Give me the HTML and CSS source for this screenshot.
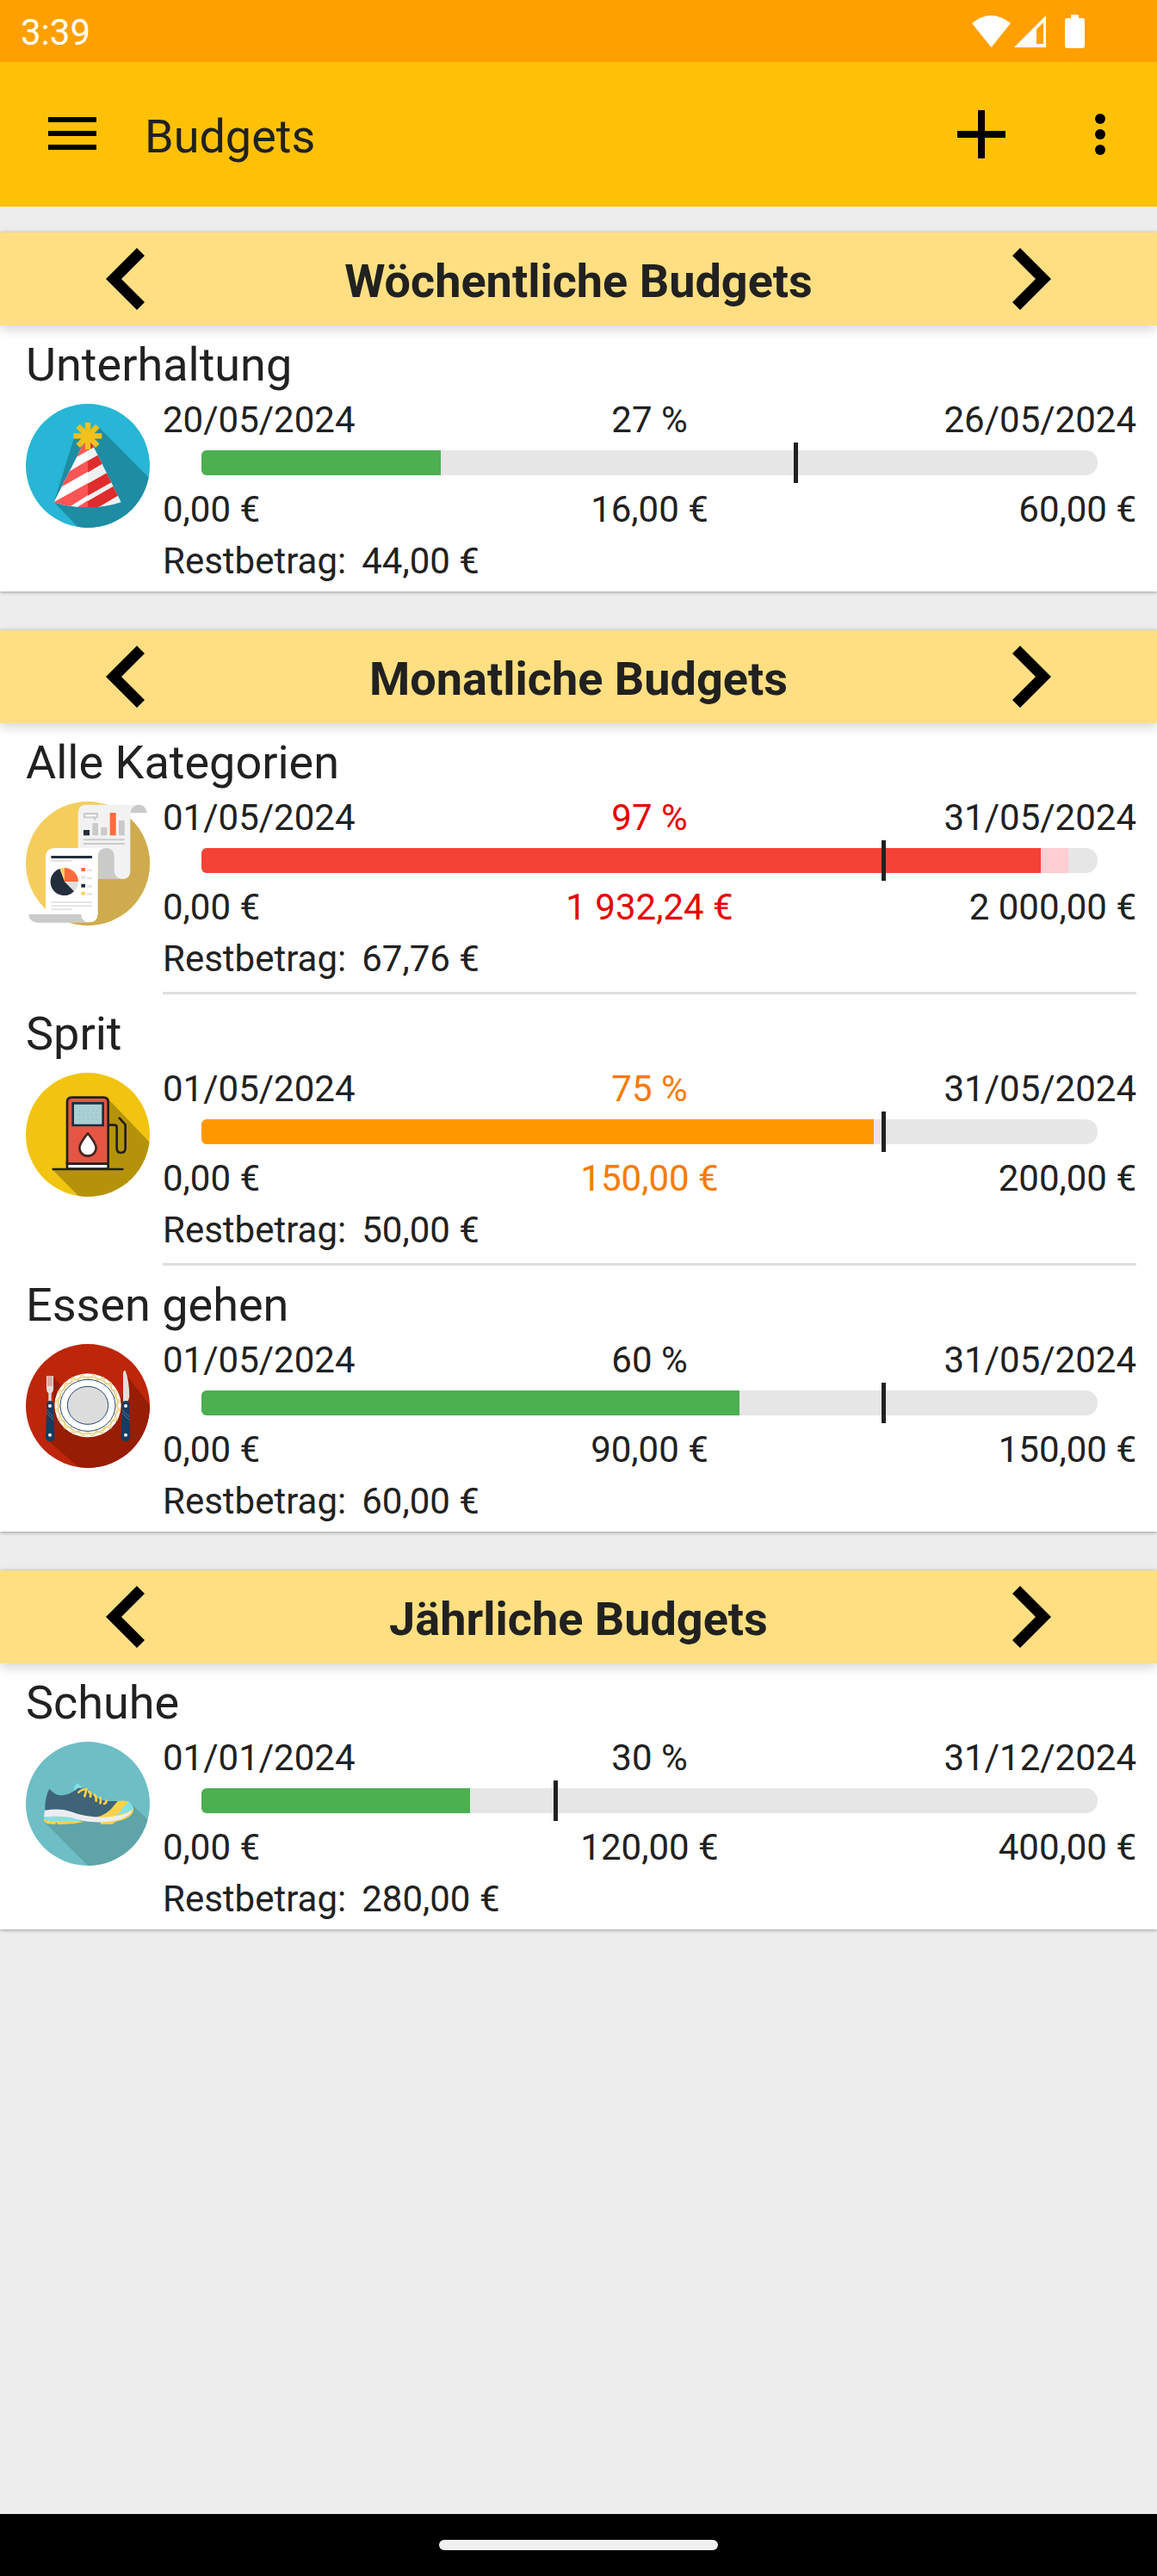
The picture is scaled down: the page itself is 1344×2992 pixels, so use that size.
FILE: index.html
```html
<!DOCTYPE html>
<html lang="de">
<head>
<meta charset="utf-8">
<meta name="viewport" content="width=device-width, initial-scale=1">
<title>Budgets</title>
<link rel="stylesheet" href="styles.css">
</head>
<body>
<div class="status-bar">
  <span>3:39</span>
  <div class="status-icons">
    <svg width="132" height="40" viewBox="0 0 132 40" aria-hidden="true">
      <path d="M0 10Q22-8 45 10L22.500 38Z" fill="#fff"/>
      <path d="M86 1V38H49Z" fill="#fff"/>
      <path d="M75 17L83 9V34H75Z" fill="#ffa000"/>
      <path d="M115 0h9v4h4q3 0 3 3v29q0 3-3 3h-17q-3 0-3-3V7q0-3 3-3h4z" fill="#fff"/>
    </svg>
  </div>
</div>
<header class="toolbar">
  <button class="tool" type="button" aria-label="Menü">
    <svg width="56" height="56" viewBox="0 0 56 56"><path d="M0 8h56v6H0zM0 24h56v6H0zM0 40h56v6H0z"/></svg>
  </button>
  <h1 class="toolbar-title">Budgets</h1>
  <button class="tool" type="button" aria-label="Hinzufügen">
    <svg width="56" height="56" viewBox="0 0 56 56"><path d="M24 0h8v24h24v8H32v24h-8V32H0v-8h24z"/></svg>
  </button>
  <button class="tool tool-more" type="button" aria-label="Weitere Optionen">
    <svg width="12" height="48" viewBox="0 0 12 48"><circle cx="6" cy="6" r="6"/><circle cx="6" cy="24" r="6"/><circle cx="6" cy="42" r="6"/></svg>
  </button>
</header>

<main class="content">
  <section class="card">
    <div class="card-head">
      <button class="step" type="button" aria-label="Vorherige Woche"><svg width="46" height="72" viewBox="0 0 46 72"><path d="M36 0L0 36L36 72L45 63L18 36L45 9Z"/></svg></button>
      <h2 class="card-title">Wöchentliche Budgets</h2>
      <button class="step" type="button" aria-label="Nächste Woche"><svg width="46" height="72" viewBox="0 0 46 72"><path d="M10 0L46 36L10 72L1 63L28 36L1 9Z"/></svg></button>
    </div>
    <article class="budget">
      <h3 class="budget-name">Unterhaltung</h3>
      <div class="budget-body">
        <svg class="budget-icon" viewBox="30 27 432 432" aria-hidden="true">
          <defs>
            <clipPath id="hat-disc"><circle cx="246" cy="243" r="216"/></clipPath>
            <clipPath id="hat-cone"><path d="M246 136L362 370Q310 388 246 388Q180 388 128 370Z"/></clipPath>
          </defs>
          <g clip-path="url(#hat-disc)">
            <path fill="#27b6d5" d="M30 27h432v432H30z"/>
            <path fill="#1e8ca2" d="M200 140L278 102L480 306V480H234L128 370Z"/>
          </g>
          <g clip-path="url(#hat-cone)">
            <path fill="#fff" d="M100 130h146v270H100z"/>
            <path fill="#eff1f1" d="M246 130h140v270H246z"/>
            <path fill="#fb5555" d="M246 130V190L190 223V130zM246 224V264L120 336V300zM246 304V346L160 400L100 400V385z"/>
            <path fill="#df2c2d" d="M246 130V190L290 166V130zM246 226V266L310 228V190zM246 305V347L340 294V252zM246 366V400H262L360 342V300z"/>
            <path fill="#fb5555" d="M246 364V400H190z"/>
          </g>
          <g stroke="#f2c11c" stroke-width="19"><path d="M246 92V186M196 139H295"/><path d="M212 105L280 173M280 105L212 173"/></g>
        </svg>
        <div class="budget-info">
          <div class="row"><span>20/05/2024</span><span>27 %</span><span>26/05/2024</span></div>
          <div class="gauge"><div class="track"><div class="fill green" style="width:26.7%"></div></div><div class="marker" style="left:66.3%"></div></div>
          <div class="row"><span>0,00 €</span><span>16,00 €</span><span>60,00 €</span></div>
          <div class="rest"><span>Restbetrag:</span><span>44,00 €</span></div>
        </div>
      </div>
    </article>
  </section>

  <section class="card">
    <div class="card-head">
      <button class="step" type="button" aria-label="Vorheriger Monat"><svg width="46" height="72" viewBox="0 0 46 72"><path d="M36 0L0 36L36 72L45 63L18 36L45 9Z"/></svg></button>
      <h2 class="card-title">Monatliche Budgets</h2>
      <button class="step" type="button" aria-label="Nächster Monat"><svg width="46" height="72" viewBox="0 0 46 72"><path d="M10 0L46 36L10 72L1 63L28 36L1 9Z"/></svg></button>
    </div>
    <article class="budget">
      <h3 class="budget-name">Alle Kategorien</h3>
      <div class="budget-body">
        <svg class="budget-icon" viewBox="30 33 432 432" aria-hidden="true">
          <defs><clipPath id="report-disc"><circle cx="246" cy="249" r="216"/></clipPath></defs>
          <g clip-path="url(#report-disc)">
            <path fill="#f4cd5c" d="M30 33h432v432H30z"/>
            <path fill="#ceac4d" d="M394 92L480 180V480H196L170 454H250L280 303H366Z"/>
          </g>
          <path fill="#cacac9" d="M394 73Q396 44 422 44Q449 44 452 73Z"/>
          <path fill="#f2f2f2" d="M212 72Q214 44 240 44H422Q396 46 394 76V275Q394 303 366 303Q338 303 338 275L300 200H212Z"/>
          <path fill="#cacac9" d="M281 195H310Q338 197 338 224V275Q340 301 366 303H281Z"/>
          <path fill="#cacac9" d="M231 72h51v19h-9v9l-10-9h-32zM262 108h20v43h-20zM292 123h21v28h-21zM354 99h20v52h-20zM231 163h143v6H231zM231 177h143v6H231z"/>
          <path fill="#fff" d="M237 79h39v6h-39z"/>
          <path fill="#ff6c3b" d="M323 72h21v79h-21z"/>
          <path fill="#232d3c" d="M231 132h21v19h-21z"/>
          <path fill="#fff" d="M99 225Q101 195 130 195H310Q281 197 281 225V425Q279 454 251 454Q222 454 222 426H99Z"/>
          <path fill="#cacac9" d="M40 426H222Q224 452 250 455H72Q42 453 40 426Z"/>
          <path fill="#232d3c" d="M118 222h143v9H118zM223 320h14v12h-14z"/>
          <path fill="#e4e4e4" d="M118 237h72v6h-72zM223 292h14v12h-14zM242 269h19v7h-19zM242 297h19v7h-19zM242 325h19v7h-19zM242 352h19v7h-19zM118 381h143v6H118zM118 394h143v6H118zM118 406h72v6h-72z"/>
          <path fill="#ff6c3b" d="M223 264h14v12h-14zM165 312V264A48 48 0 0 1 213 312Z"/>
          <path fill="#f8d35d" d="M223 347h14v12h-14zM165 312L148 267Q156 264 165 264Z"/>
          <path fill="#dededf" d="M165 312H213Q213 332 198 346Z"/>
          <path fill="#232d3c" d="M165 312L198 346A48 48 0 1 1 148 267Z"/>
        </svg>
        <div class="budget-info">
          <div class="row"><span>01/05/2024</span><span class="over">97 %</span><span>31/05/2024</span></div>
          <div class="gauge"><div class="track"><div class="fill red" style="width:93.7%"></div><div class="fill-extra" style="width:3%"></div></div><div class="marker" style="left:76.1%"></div></div>
          <div class="row"><span>0,00 €</span><span class="over">1 932,24 €</span><span>2 000,00 €</span></div>
          <div class="rest"><span>Restbetrag:</span><span>67,76 €</span></div>
        </div>
      </div>
    </article>
    <hr class="divider">
    <article class="budget">
      <h3 class="budget-name">Sprit</h3>
      <div class="budget-body">
        <svg class="budget-icon" viewBox="30 30 432 432" aria-hidden="true">
          <defs><clipPath id="pump-disc"><circle cx="246" cy="246" r="216"/></clipPath></defs>
          <g clip-path="url(#pump-disc)">
            <path fill="#f1c40f" d="M30 30h432v432H30z"/>
            <path fill="#b4930b" d="M316 120L480 292V480H234L122 367H320Z"/>
          </g>
          <g stroke="#231f20" stroke-width="8" stroke-linecap="round" stroke-linejoin="round">
            <path fill="#fff" d="M174 340h143v25H174z"/>
            <path fill="#e65544" d="M174 347V132Q174 116 190 116H301Q317 116 317 132V347Z"/>
            <path fill="none" d="M125 366H367M320 212H338Q347 212 347 221V292Q347 309 361 309Q377 309 377 292V211L356 188"/>
          </g>
          <path fill="#a9d0d5" stroke="#202c3b" stroke-width="8" d="M194 136h105v77H194z"/>
          <path fill="none" stroke="#82b6b8" stroke-width="3" stroke-dasharray="3 12" d="M216 163H282M214 178H282M216 193H282"/>
          <path fill="#fff" stroke="#432820" stroke-width="8" stroke-linejoin="round" d="M246 241Q275 276 275 292A29 28 0 0 1 217 292Q217 276 246 241Z"/>
        </svg>
        <div class="budget-info">
          <div class="row"><span>01/05/2024</span><span class="near">75 %</span><span>31/05/2024</span></div>
          <div class="gauge"><div class="track"><div class="fill orange" style="width:75%"></div></div><div class="marker" style="left:76.1%"></div></div>
          <div class="row"><span>0,00 €</span><span class="near">150,00 €</span><span>200,00 €</span></div>
          <div class="rest"><span>Restbetrag:</span><span>50,00 €</span></div>
        </div>
      </div>
    </article>
    <hr class="divider">
    <article class="budget">
      <h3 class="budget-name">Essen gehen</h3>
      <div class="budget-body">
        <svg class="budget-icon" viewBox="30 33 432 432" aria-hidden="true">
          <defs><clipPath id="plate-disc"><circle cx="246" cy="249" r="216"/></clipPath></defs>
          <g clip-path="url(#plate-disc)">
            <path fill="#bd260a" d="M30 33h432v432H30z"/>
            <path fill="#971d05" d="M126 150L190 215L330 330L386 148L480 268V480H234L106 368L126 290Z"/>
          </g>
          <ellipse cx="246" cy="247" rx="116" ry="111" fill="#fff"/>
          <ellipse cx="246" cy="247" rx="104" ry="99" fill="none" stroke="#ead27e" stroke-width="4"/>
          <path fill="none" stroke="#ead27e" stroke-width="4" d="M246 154L268 140L278 160L301 150L306 173L328 169L328 193L349 198L340 219L358 233L342 248L358 264L340 277L348 298L327 302L326 326L303 322L296 345L276 335L264 355L246 340L228 355L216 335L194 345L188 322L165 326L165 302L143 298L152 277L134 264L150 248L134 233L152 219L143 198L165 193L165 169L187 173L192 150L214 160L224 140Z"/>
          <ellipse cx="246" cy="247" rx="96" ry="90" fill="#fff" stroke="#274a72" stroke-width="3"/>
          <ellipse cx="246" cy="247" rx="71" ry="66" fill="#dcdcdc" stroke="#274a72" stroke-width="3"/>
          <path fill="#e1dedd" d="M102 144H126V190Q126 201 119 205V234H109V205Q102 201 102 190ZM369 234V134Q371 123 377 126Q390 160 391 215Q390 225 384 234Z"/>
          <path stroke="#c24a36" stroke-width="2" d="M108 144V180M114 144V180M120 144V180"/>
          <path fill="#173b61" d="M103 242Q104 231 114 231Q125 231 126 242L130 360Q128 372 114 372Q100 372 99 360ZM365 242Q367 231 378 231Q389 231 390 242L393 360Q391 372 378 372Q364 372 362 360Z"/>
          <path stroke="#5f7891" stroke-width="3" d="M102 263L127 287M102 274L127 298M366 263L391 287M366 274L391 298"/>
          <g fill="#fff"><circle cx="114" cy="249" r="6"/><circle cx="114" cy="350" r="6"/><circle cx="378" cy="249" r="6"/><circle cx="378" cy="350" r="6"/></g>
        </svg>
        <div class="budget-info">
          <div class="row"><span>01/05/2024</span><span>60 %</span><span>31/05/2024</span></div>
          <div class="gauge"><div class="track"><div class="fill green" style="width:60%"></div></div><div class="marker" style="left:76.1%"></div></div>
          <div class="row"><span>0,00 €</span><span>90,00 €</span><span>150,00 €</span></div>
          <div class="rest"><span>Restbetrag:</span><span>60,00 €</span></div>
        </div>
      </div>
    </article>
  </section>

  <section class="card">
    <div class="card-head">
      <button class="step" type="button" aria-label="Vorheriges Jahr"><svg width="46" height="72" viewBox="0 0 46 72"><path d="M36 0L0 36L36 72L45 63L18 36L45 9Z"/></svg></button>
      <h2 class="card-title">Jährliche Budgets</h2>
      <button class="step" type="button" aria-label="Nächstes Jahr"><svg width="46" height="72" viewBox="0 0 46 72"><path d="M10 0L46 36L10 72L1 63L28 36L1 9Z"/></svg></button>
    </div>
    <article class="budget">
      <h3 class="budget-name">Schuhe</h3>
      <div class="budget-body">
        <svg class="budget-icon" viewBox="30 27 432 432" aria-hidden="true">
          <defs><clipPath id="shoe-disc"><circle cx="246" cy="243" r="216"/></clipPath></defs>
          <g clip-path="url(#shoe-disc)">
            <path fill="#6ebec5" d="M30 27h432v432H30z"/>
            <path fill="#5ea4a8" d="M404 250L480 322V480H268L92 304L300 290Z"/>
          </g>
          <path fill="#80e1e7" d="M198 196Q198 178 210 171Q216 180 230 186L210 206Z"/>
          <path fill="#3f6478" d="M97 268Q95 222 112 191Q132 214 156 214Q186 211 212 188H240Q270 224 310 234H348L352 262L290 296H200Z"/>
          <path fill="#ffd34b" d="M91 298Q96 312 108 313L132 315L136 307L141 315Q190 316 232 307L180 294ZM272 292Q315 281 337 250L350 234Q372 231 388 235L404 256Q408 268 400 279Q382 299 352 303L340 307Q338 314 328 314H292L288 305Z"/>
          <path fill="#80e1e7" d="M388 236Q403 245 404 260Q390 276 330 285Q356 281 366 262Q372 250 388 236ZM93 286L180 289L220 302Q160 305 104 303Q92 298 93 286Z"/>
          <path fill="#ededf0" d="M96 266Q150 258 185 270Q236 290 300 290Q368 290 402 264Q394 284 363 296Q320 309 270 307Q222 305 186 291Q145 284 93 289Z"/>
          <path fill="none" stroke="#ffd34b" stroke-width="8" stroke-linecap="round" stroke-linejoin="round" d="M214 203Q226 192 242 192L235 217M250 201Q259 208 255 218M269 212Q278 221 275 233M288 222Q294 230 289 241M311 233Q310 241 303 243"/>
        </svg>
        <div class="budget-info">
          <div class="row"><span>01/01/2024</span><span>30 %</span><span>31/12/2024</span></div>
          <div class="gauge"><div class="track"><div class="fill green" style="width:30%"></div></div><div class="marker" style="left:39.5%"></div></div>
          <div class="row"><span>0,00 €</span><span>120,00 €</span><span>400,00 €</span></div>
          <div class="rest"><span>Restbetrag:</span><span>280,00 €</span></div>
        </div>
      </div>
    </article>
  </section>
</main>

<div class="nav-bar"><div class="nav-handle"></div></div>
</body>
</html>
```

FILE: styles.css
```css
* {
  box-sizing: border-box;
}

body {
  margin: 0;
  min-height: 100vh;
  display: flex;
  flex-direction: column;
  background: #ededed;
  color: #212121;
  font-family: Roboto, "Liberation Sans", sans-serif;
  font-size: 42px;
  line-height: 49px;
}

h1,
h2,
h3 {
  margin: 0;
  font-size: 54px;
  line-height: 63px;
}

button {
  display: flex;
  align-items: center;
  justify-content: center;
  padding: 0;
  border: 0;
  background: none;
  cursor: pointer;
}

svg {
  display: block;
}

.status-bar {
  display: flex;
  align-items: center;
  justify-content: space-between;
  height: 72px;
  padding: 2px 83px 0 24px;
  background: #ffa000;
  color: #fff;
}

.toolbar {
  display: flex;
  align-items: center;
  height: 168px;
  padding: 0 60px 0 56px;
  background: #ffc107;
}

.toolbar-title {
  flex: 1;
  padding: 5px 0 0 56px;
  font-weight: 400;
}

.tool {
  height: 96px;
}

.tool-more {
  margin-left: 104px;
}

.content {
  flex: 1;
  display: flex;
  flex-direction: column;
  gap: 45px;
  padding: 30px 0 45px;
}

.card {
  background: #fff;
  box-shadow: 0 1px 4px rgba(0, 0, 0, 0.35);
}

.card-head {
  display: flex;
  align-items: center;
  justify-content: space-between;
  height: 108px;
  padding: 0 123px;
  background: #ffdf82;
  box-shadow: 0 5px 12px rgba(0, 0, 0, 0.16);
}

.card-title {
  padding-top: 5px;
  font-weight: 700;
}

.step {
  height: 108px;
}

.budget {
  padding: 14px 24px 11px 30px;
}

.budget-name {
  margin-bottom: 8px;
  font-weight: 400;
}

.budget-body {
  display: flex;
  gap: 15px;
}

.budget-icon {
  flex: none;
  width: 144px;
  height: 144px;
  margin-top: 6px;
}

.budget-info {
  flex: 1;
}

.row {
  display: grid;
  grid-template-columns: 1fr auto 1fr;
}

.row > :last-child {
  text-align: right;
}

.over {
  color: #e60000;
}

.near {
  color: #f57c00;
}

.gauge {
  position: relative;
  display: flex;
  align-items: center;
  height: 47px;
  margin: 2px 45px 6px;
}

.track {
  flex: 1;
  display: flex;
  height: 29px;
  overflow: hidden;
  border-radius: 6px 14px 14px 6px;
  background: #e6e6e6;
}

.green {
  background: #4caf50;
}

.red {
  background: #f44336;
}

.orange {
  background: #ff9800;
}

.fill-extra {
  background: #ffcdd2;
}

.marker {
  position: absolute;
  top: 0;
  width: 5px;
  height: 47px;
  margin-left: -2px;
  background: #212121;
}

.rest {
  display: flex;
  gap: 18px;
  margin-top: 11px;
}

.divider {
  height: 3px;
  margin: 3px 24px 0 189px;
  border: 0;
  background: #dedede;
}

.nav-bar {
  display: flex;
  align-items: center;
  justify-content: center;
  height: 72px;
  background: #000;
}

.nav-handle {
  width: 324px;
  height: 12px;
  border-radius: 6px;
  background: #f0f0f0;
}
```
